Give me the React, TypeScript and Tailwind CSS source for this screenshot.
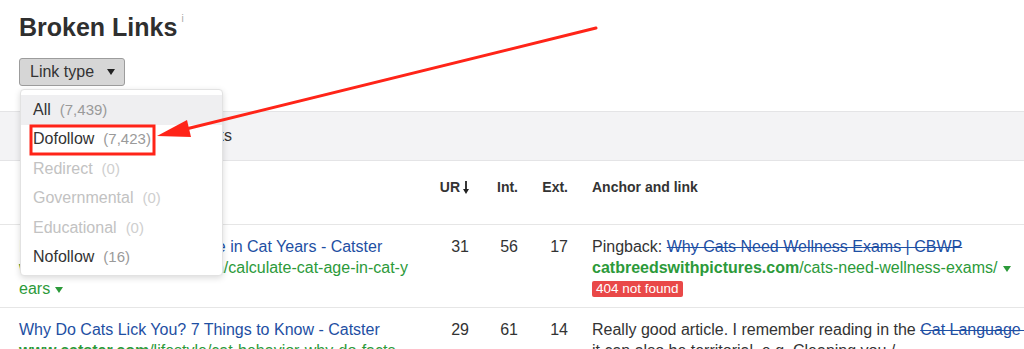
import React from 'react';

const font = { fontFamily: '"Liberation Sans", Arial, sans-serif' };

interface MenuItem {
  label: string;
  count: string;
  disabled?: boolean;
  active?: boolean;
}

const menuItems: MenuItem[] = [
  { label: 'All', count: '(7,439)', active: true },
  { label: 'Dofollow', count: '(7,423)' },
  { label: 'Redirect', count: '(0)', disabled: true },
  { label: 'Governmental', count: '(0)', disabled: true },
  { label: 'Educational', count: '(0)', disabled: true },
  { label: 'Nofollow', count: '(16)' },
];

const Caret = ({ className }: { className: string }) => (
  <svg viewBox="0 0 8 6" className={className}>
    <path d="M0 0 L8 0 L4 6 Z" fill="currentColor" />
  </svg>
);

const LinkTypeMenu = () => (
  <div className="absolute left-[20px] top-[89px] w-[203px] rounded-[4px] border border-[#e2e2e2] bg-white pt-[5px] pb-[3px] shadow-[0_2px_6px_rgba(0,0,0,0.15)]">
    {menuItems.map((item) => (
      <div
        key={item.label}
        className={`flex h-[29.5px] items-center pl-[12px] text-[16px] ${item.active ? 'bg-[#efeff1]' : ''}`}
      >
        <span className={item.disabled ? 'text-[#c2c2c2]' : 'text-[#333]'}>{item.label}</span>
        <span className={`ml-[9px] text-[15px] ${item.disabled ? 'text-[#cfcfcf]' : 'text-[#9a9a9a]'}`}>
          {item.count}
        </span>
      </div>
    ))}
  </div>
);

// red callout drawn over the screenshot
const Annotation = () => (
  <svg className="pointer-events-none absolute inset-0" width="1024" height="349" viewBox="0 0 1024 349">
    <rect x="31" y="126" width="123" height="28" fill="none" stroke="#ff2418" strokeWidth="3" />
    <line x1="596" y1="28" x2="186" y2="129" stroke="#ff2418" strokeWidth="3" strokeLinecap="round" />
    <path d="M157 136 L187 120 L191 137 Z" fill="#ff2418" />
  </svg>
);

export default function App() {
  return (
    <div className="relative h-[349px] w-[1024px] overflow-hidden bg-white text-[#333]" style={font}>
      <div className="px-[19px] pt-[12px]">
        <h1 className="flex items-start text-[25px] font-bold leading-[30px] text-[#2f2f2f]">
          Broken Links
          <span className="ml-[4px] mt-[1px] text-[10px] font-normal leading-[12px] text-[#a8a8a8]">i</span>
        </h1>
        <button className="mt-[16px] flex h-[28px] w-[106px] items-center rounded-[3px] border border-[#9c9c9c] bg-[#d6d6d6] pl-[10px] text-[16px] text-[#333]">
          Link type
          <Caret className="ml-[13px] h-[6px] w-[8px] text-[#222]" />
        </button>
      </div>

      <div className="mt-[25px] flex h-[50px] items-center border-y border-[#e4e4e6] bg-[#f3f3f5]">
        <div className="w-[232px] text-right text-[16px] text-[#333]">Similar links</div>
      </div>

      <div className="flex h-[64px] items-start border-b border-[#e6e6e6] pl-[19px] pt-[16px] text-[14px] font-bold leading-[20px] text-[#333]">
        <div className="w-[400px] shrink-0" />
        <div className="flex h-[20px] w-[50px] shrink-0 items-center justify-end">
          UR
          <svg viewBox="0 0 6 13" className="ml-[3px] h-[13px] w-[6px]">
            <path d="M3 0 V10" stroke="#222" strokeWidth="1.8" />
            <path d="M0 8 L6 8 L3 13 Z" fill="#222" />
          </svg>
        </div>
        <div className="w-[49px] shrink-0 text-right">Int.</div>
        <div className="w-[50px] shrink-0 text-right">Ext.</div>
        <div className="shrink-0 pl-[24px]">Anchor and link</div>
      </div>

      <div className="flex border-b border-[#e6e6e6] pb-[8px] pl-[19px] pt-[11px] text-[16px] leading-[21px]">
        <div className="w-[400px] shrink-0">
          <div className="w-[394px] text-[#1e4fa3]">How to Calculate a Cat's Age in Cat Years - Catster</div>
          <div className="w-[394px] break-all text-[#2c9a3a]">
            <span className="font-bold">www.catster.com</span>/cat-health/calculate-cat-age-in-cat-years
            <Caret className="ml-[5px] inline-block h-[6px] w-[8px] align-middle" />
          </div>
        </div>
        <div className="w-[50px] shrink-0 text-right">31</div>
        <div className="w-[49px] shrink-0 text-right">56</div>
        <div className="w-[50px] shrink-0 text-right">17</div>
        <div className="shrink-0 whitespace-nowrap pl-[24px]">
          <div>
            Pingback: <span className="text-[#1e4fa3] line-through">Why Cats Need Wellness Exams | CBWP</span>
          </div>
          <div className="text-[#2c9a3a]">
            <span className="font-bold">catbreedswithpictures.com</span>/cats-need-wellness-exams/
            <Caret className="ml-[6px] inline-block h-[6px] w-[8px] align-middle" />
          </div>
          <div className="flex h-[21px] items-center">
            <span className="flex h-[16px] items-center rounded-[2px] bg-[#e94848] px-[4px] text-[13.5px] leading-none text-white">
              404 not found
            </span>
          </div>
        </div>
      </div>

      <div className="flex pl-[19px] pt-[11px] text-[16px] leading-[21px]">
        <div className="w-[400px] shrink-0">
          <div className="w-[394px] text-[#1e4fa3]">Why Do Cats Lick You? 7 Things to Know - Catster</div>
          <div className="w-[394px] break-all text-[#2c9a3a]">
            <span className="font-bold">www.catster.com</span>/lifestyle/cat-behavior-why-do-facts
            <Caret className="ml-[5px] inline-block h-[6px] w-[8px] align-middle" />
          </div>
        </div>
        <div className="w-[50px] shrink-0 text-right">29</div>
        <div className="w-[49px] shrink-0 text-right">61</div>
        <div className="w-[50px] shrink-0 text-right">14</div>
        <div className="shrink-0 whitespace-nowrap pl-[24px]">
          <div>
            Really good article. I remember reading in the{' '}
            <span className="text-[#1e4fa3] line-through">Cat Language Bible</span>
          </div>
          <div>it can also be territorial, e.g. Cleaning you /</div>
        </div>
      </div>

      <LinkTypeMenu />
      <Annotation />
    </div>
  );
}
